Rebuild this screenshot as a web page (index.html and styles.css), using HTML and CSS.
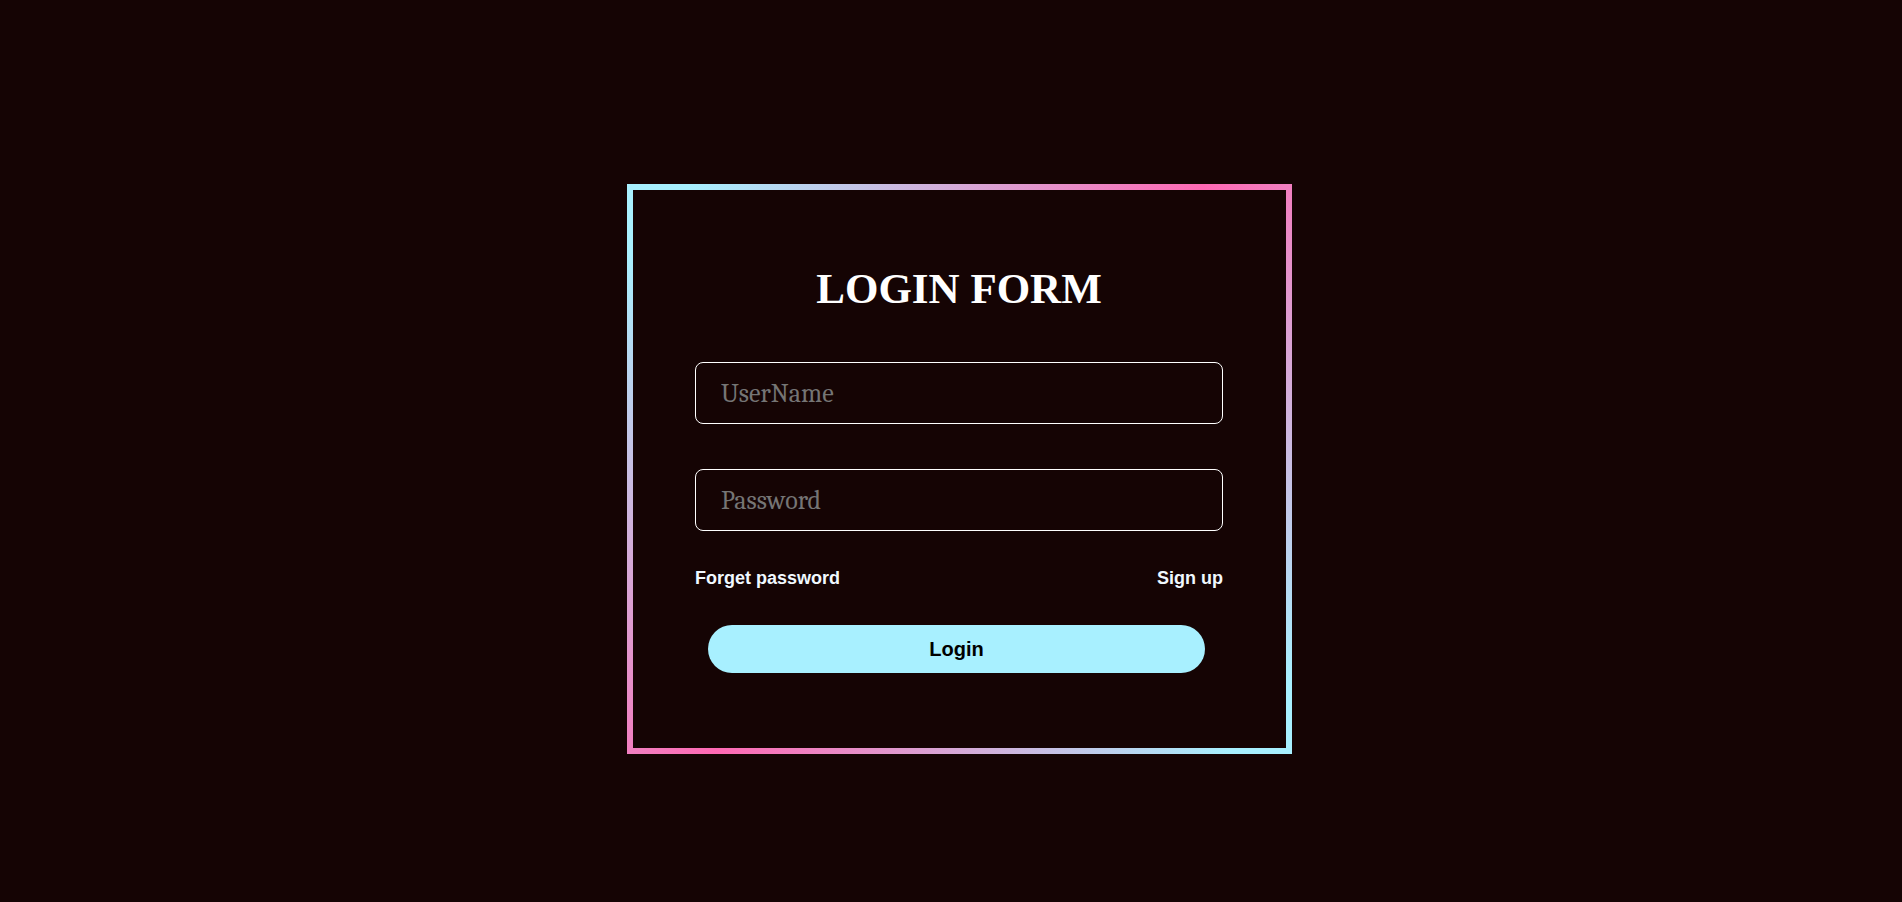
FILE: index.html
```html
<!DOCTYPE html>
<html lang="en">
<head>
<meta charset="utf-8">
<meta name="viewport" content="width=device-width, initial-scale=1">
<title>Login Form</title>
<link rel="stylesheet" href="styles.css">
</head>
<body class="page">
<main class="stage">
  <form class="login">
    <h1 class="login-title">LOGIN FORM</h1>
    <div class="login-fields">
      <input class="field" type="text" name="username" placeholder="UserName" aria-label="UserName">
      <input class="field" type="password" name="password" placeholder="Password" aria-label="Password">
    </div>
    <nav class="login-links">
      <a class="login-link" href="#forgot">Forget password</a>
      <a class="login-link" href="#signup">Sign up</a>
    </nav>
    <button class="login-button" type="submit">Login</button>
  </form>
</main>
</body>
</html>
```
FILE: styles.css
```css
* {
  box-sizing: border-box;
}

.page {
  margin: 0;
  background: #150404;
  font-family: "Liberation Serif", "Times New Roman", serif;
}

.stage {
  min-height: 100vh;
  display: flex;
  align-items: center;
  justify-content: center;
  padding: 36px 0 0 17px;
}

.login {
  width: 100%;
  max-width: 665px;
  display: flex;
  flex-direction: column;
  padding: 74px 63px 75px 62px;
  border: 6px solid;
  border-image: linear-gradient(131deg, #a8f0ff 5%, #ff69b4 50%, #a8f0ff 95%) 1;
}

.login-title {
  margin: 0 0 48px;
  color: #fff;
  font-size: 43px;
  line-height: 50px;
  text-align: center;
}

.login-fields {
  display: flex;
  flex-direction: column;
  gap: 45px;
}

.field {
  width: 100%;
  height: 62px;
  padding: 2px 25px 0;
  border: 1px solid #fff;
  border-radius: 8px;
  background: transparent;
  color: #fff;
  font-family: Cambria, "Liberation Serif", serif;
  font-size: 26px;
}

.field::placeholder {
  color: #757575;
}

.login-links {
  display: flex;
  justify-content: space-between;
  margin: 37px 0;
}

.login-link {
  color: aliceblue;
  font: bold 18px/20px "Liberation Sans", Arial, sans-serif;
  text-decoration: none;
}

.login-button {
  height: 48px;
  margin: 0 18px 0 13px;
  border: 0;
  border-radius: 24px;
  background: #a8f0ff;
  color: #000;
  font: bold 20px/24px "Liberation Sans", Arial, sans-serif;
  cursor: pointer;
}
```
